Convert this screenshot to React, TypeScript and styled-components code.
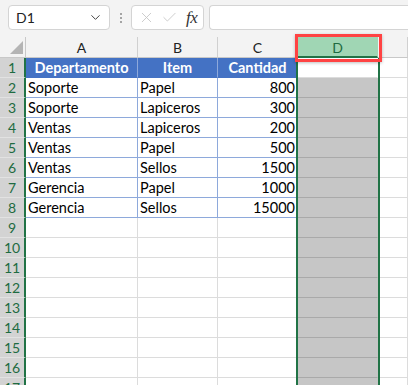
import * as React from 'react';
import styled, { createGlobalStyle, css } from 'styled-components';
import { ChevronDown, X, Check } from 'lucide-react';

const GlobalStyle = createGlobalStyle`
  html, body {
    margin: 0;
    padding: 0;
    background: #ffffff;
    overflow: hidden;
  }
  body {
    font-family: Lato, "Liberation Sans", sans-serif;
  }
`;

const GREEN = '#217346';

const Page = styled.div`
  width: 408px;
  height: 385px;
  overflow: hidden;
  background: #ffffff;
`;

const Toolbar = styled.div`
  height: 37px;
  box-sizing: border-box;
  padding: 5px 0 0 8px;
  display: flex;
  align-items: flex-start;
  background: #f3f3f3;
`;

const Box = styled.div<{ $width?: number }>`
  height: 25px;
  box-sizing: border-box;
  width: ${(p) => (p.$width ? `${p.$width}px` : 'auto')};
  flex: ${(p) => (p.$width ? '0 0 auto' : '1 1 auto')};
  background: #ffffff;
  border: 1px solid #d4d4d4;
  border-radius: 4px;
  display: flex;
  align-items: center;
`;

const NameBox = styled(Box)`
  justify-content: space-between;
  padding: 0 6px 0 7px;
  font-size: 14px;
  color: #222;
`;

const Dots = styled.div`
  width: 21px;
  height: 25px;
  display: flex;
  flex-direction: column;
  align-items: center;
  justify-content: center;
  gap: 2px;
  span {
    width: 2px;
    height: 2px;
    background: #8a8a8a;
    border-radius: 1px;
  }
`;

const FormulaButtons = styled(Box)`
  padding: 0 4px 0 6px;
  gap: 6px;
  margin-right: 5px;
`;

const Fx = styled.span`
  font-family: "Liberation Serif", serif;
  font-style: italic;
  font-size: 17px;
  color: #333;
  margin-left: 2px;
  letter-spacing: -0.5px;
`;

const FormulaInput = styled(Box)`
  border-right: none;
  border-radius: 4px 0 0 4px;
`;

const Sheet = styled.div`
  display: grid;
  grid-template-columns: 26px 112px 80px 80px 80px 1fr;
  grid-template-rows: 21px repeat(17, 20px);
`;

type Pos = { $r: number; $c: number };

const placed = css<Pos>`
  grid-row: ${(p) => p.$r};
  grid-column: ${(p) => p.$c};
`;

const Corner = styled.div<Pos>`
  ${placed};
  background: #f3f3f3;
  border-right: 1px solid #c8c8c8;
  border-bottom: 1px solid #c8c8c8;
  position: relative;
  box-sizing: border-box;
  &::after {
    content: '';
    position: absolute;
    right: 2px;
    bottom: 3px;
    width: 0;
    height: 0;
    border-left: 13px solid transparent;
    border-bottom: 13px solid #b4b4b4;
  }
`;

const ColHead = styled.div<Pos & { $selected?: boolean }>`
  ${placed};
  box-sizing: border-box;
  background: ${(p) => (p.$selected ? '#a0d6b4' : '#f3f3f3')};
  color: ${(p) => (p.$selected ? '#1e6b41' : '#222')};
  border-right: 1px solid ${(p) => (p.$selected ? '#a0d6b4' : '#d0d0d0')};
  border-bottom: ${(p) => (p.$selected ? `2px solid ${GREEN}` : '1px solid #c8c8c8')};
  font-size: 14px;
  display: flex;
  align-items: center;
  justify-content: center;
  padding-top: ${(p) => (p.$selected ? '1px' : '0')};
`;

const RowHead = styled.div<Pos>`
  ${placed};
  box-sizing: border-box;
  background: #d3d3d3;
  color: #1e6b41;
  border-right: 2px solid ${GREEN};
  border-bottom: 1px solid #e2e2e2;
  font-size: 14px;
  display: flex;
  align-items: center;
  justify-content: center;
`;

type CellKind = 'empty' | 'head' | 'data' | 'sel' | 'active';

const lineColor = (k: CellKind) =>
  k === 'head' || k === 'data' ? '#8ea9db' : k === 'sel' ? '#a9a9a9' : '#dcdcdc';

const Cell = styled.div<Pos & { $kind: CellKind; $right?: boolean }>`
  ${placed};
  box-sizing: border-box;
  font-size: 14.5px;
  line-height: 19px;
  padding: 0 2px;
  white-space: nowrap;
  overflow: hidden;
  display: flex;
  align-items: center;
  justify-content: ${(p) => (p.$kind === 'head' ? 'center' : p.$right ? 'flex-end' : 'flex-start')};
  color: ${(p) => (p.$kind === 'head' ? '#ffffff' : '#000')};
  font-weight: ${(p) => (p.$kind === 'head' ? 700 : 400)};
  background: ${(p) =>
    p.$kind === 'head' ? '#4472c4' : p.$kind === 'sel' ? '#c6c6c6' : '#ffffff'};
  border-right: 1px solid
    ${(p) => (p.$kind === 'sel' ? '#c6c6c6' : p.$kind === 'active' ? '#ffffff' : lineColor(p.$kind))};
  border-bottom: 1px solid
    ${(p) => (p.$kind === 'head' ? '#4472c4' : lineColor(p.$kind))};
`;

const SelectionFrame = styled.div`
  grid-column: 5;
  grid-row: 2 / -1;
  margin: 0 -2px 0 -2px;
  border-left: 2px solid ${GREEN};
  border-right: 2px solid ${GREEN};
  pointer-events: none;
  z-index: 2;
`;

const Callout = styled.div`
  grid-column: 5;
  grid-row: 1;
  margin: -3px -4px -4px -3px;
  border: 3px solid #ff4343;
  box-shadow: 0 1px 3px rgba(0, 0, 0, 0.25);
  pointer-events: none;
  z-index: 3;
`;

const data: [string, string, string][] = [
  ['Soporte', 'Papel', '800'],
  ['Soporte', 'Lapiceros', '300'],
  ['Ventas', 'Lapiceros', '200'],
  ['Ventas', 'Papel', '500'],
  ['Ventas', 'Sellos', '1500'],
  ['Gerencia', 'Papel', '1000'],
  ['Gerencia', 'Sellos', '15000'],
];

const columns = ['A', 'B', 'C', 'D', ''];

export default function App() {
  const rows = Array.from({ length: 17 }, (_, i) => i + 1);
  return (
    <Page>
      <GlobalStyle />
      <Toolbar>
        <NameBox $width={102}>
          <span>D1</span>
          <ChevronDown size={15} strokeWidth={1.6} color="#444" />
        </NameBox>
        <Dots>
          <span />
          <span />
          <span />
        </Dots>
        <FormulaButtons $width={73}>
          <X size={17} strokeWidth={1.2} color="#c4c4c4" />
          <Check size={17} strokeWidth={1.2} color="#c4c4c4" />
          <Fx>fx</Fx>
        </FormulaButtons>
        <FormulaInput />
      </Toolbar>
      <Sheet>
        <Corner $r={1} $c={1} />
        {columns.map((c, i) => (
          <ColHead key={i} $r={1} $c={i + 2} $selected={c === 'D'}>
            {c}
          </ColHead>
        ))}
        {rows.map((r) => {
          const g = r + 1;
          const row = r >= 2 && r <= 8 ? data[r - 2] : null;
          return (
            <React.Fragment key={r}>
              <RowHead $r={g} $c={1}>{r}</RowHead>
              {r === 1 ? (
                <>
                  <Cell $r={g} $c={2} $kind="head">Departamento</Cell>
                  <Cell $r={g} $c={3} $kind="head">Item</Cell>
                  <Cell $r={g} $c={4} $kind="head">Cantidad</Cell>
                  <Cell $r={g} $c={5} $kind="active" />
                </>
              ) : row ? (
                <>
                  <Cell $r={g} $c={2} $kind="data">{row[0]}</Cell>
                  <Cell $r={g} $c={3} $kind="data">{row[1]}</Cell>
                  <Cell $r={g} $c={4} $kind="data" $right>
                    {row[2]}
                  </Cell>
                  <Cell $r={g} $c={5} $kind="sel" />
                </>
              ) : (
                <>
                  <Cell $r={g} $c={2} $kind="empty" />
                  <Cell $r={g} $c={3} $kind="empty" />
                  <Cell $r={g} $c={4} $kind="empty" />
                  <Cell $r={g} $c={5} $kind="sel" />
                </>
              )}
              <Cell $r={g} $c={6} $kind="empty" />
            </React.Fragment>
          );
        })}
        <SelectionFrame />
        <Callout />
      </Sheet>
    </Page>
  );
}
